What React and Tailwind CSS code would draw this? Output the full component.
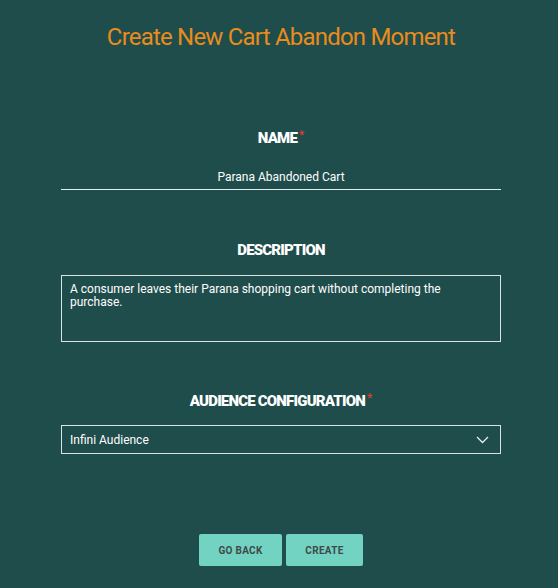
import React from "react";

function Label({ children, required }) {
  return (
    <div className="flex justify-center items-start text-[15px] leading-[21px]">
      <span className="font-black uppercase text-white tracking-[-0.8px]">{children}</span>
      {required && <span className="ml-[2px] mt-[0px] text-[12px] leading-[14px] text-[#ec3b30]">*</span>}
    </div>
  );
}

export default function App() {
  return (
    <div className="w-[558px] h-[588px] bg-[#1e4d4b] font-['Roboto',sans-serif] flex flex-col items-center pl-[4px]">
      <h1 className="mt-[22px] text-[24px] leading-[30px] text-[#e98b1d] tracking-[-0.8px]">Create New Cart Abandon Moment</h1>

      <div className="w-[440px] mt-[76px] flex flex-col">
        <Label required>Name</Label>
        <div className="mt-[21px] border-b border-[#e6eeee] pb-[5px] text-center text-[12px] leading-[14px] text-white">
          Parana Abandoned Cart
        </div>

        <div className="mt-[50px]">
          <Label>Description</Label>
        </div>
        <div className="mt-[14px] h-[67px] border border-[#d8e4e3] px-[8px] pt-[7px] text-[12px] leading-[13px] text-white">
          A consumer leaves their Parana shopping cart without completing the purchase.
        </div>

        <div className="mt-[49px]">
          <Label required>Audience Configuration</Label>
        </div>
        <div className="mt-[13px] h-[29px] border border-[#d8e4e3] pl-[8px] pr-[11px] flex items-center justify-between text-[12px] text-white">
          <span>Infini Audience</span>
          <svg width="13" height="8" viewBox="0 0 13 8" fill="none">
            <path d="M1 1l5.5 5.5L12 1" stroke="#e6eeee" strokeWidth="1.3" />
          </svg>
        </div>
      </div>

      <div className="mt-[80px] flex gap-[4px]">
        <button className="w-[83px] h-[32px] rounded-[2px] bg-[#73d3c2] text-[10px] font-bold text-[#3e4a48] tracking-[0.3px]">GO BACK</button>
        <button className="w-[77px] h-[32px] rounded-[2px] bg-[#73d3c2] text-[10px] font-bold text-[#3e4a48] tracking-[0.3px]">CREATE</button>
      </div>
    </div>
  );
}
